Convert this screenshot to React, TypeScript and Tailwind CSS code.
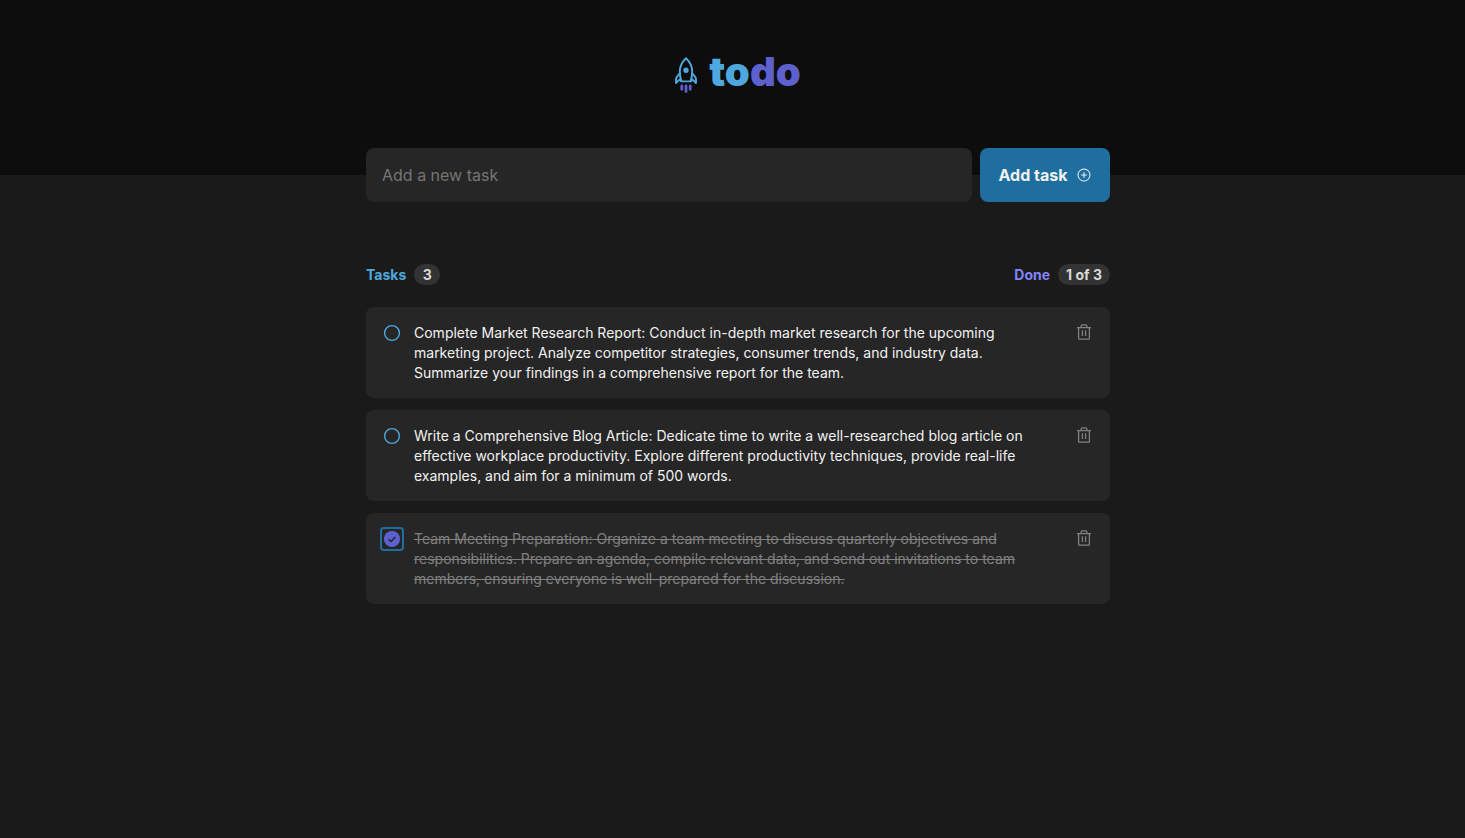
import { useState } from 'react';
import { PiPlusCircle } from 'react-icons/pi';

type Task = { id: number; text: string; done: boolean };

const initialTasks: Task[] = [
  {
    id: 1,
    text: 'Complete Market Research Report: Conduct in-depth market research for the upcoming marketing project. Analyze competitor strategies, consumer trends, and industry data. Summarize your findings in a comprehensive report for the team.',
    done: false,
  },
  {
    id: 2,
    text: 'Write a Comprehensive Blog Article: Dedicate time to write a well-researched blog article on effective workplace productivity. Explore different productivity techniques, provide real-life examples, and aim for a minimum of 500 words.',
    done: false,
  },
  {
    id: 3,
    text: 'Team Meeting Preparation: Organize a team meeting to discuss quarterly objectives and responsibilities. Prepare an agenda, compile relevant data, and send out invitations to team members, ensuring everyone is well-prepared for the discussion.',
    done: true,
  },
];

function Rocket() {
  return (
    <svg width="22" height="42" viewBox="0 -6 22 42" fill="none" aria-hidden="true">
      <path
        d="M11 1.2C7.4 4.6 4.8 9.4 4.8 14.6C4.8 18.2 5.4 21.4 6.4 24.4H15.6C16.6 21.4 17.2 18.2 17.2 14.6C17.2 9.4 14.6 4.6 11 1.2Z"
        stroke="#4EA8DE"
        strokeWidth="1.9"
        strokeLinejoin="round"
      />
      <path
        d="M5 16.2L2.4 19.2C1.4 20.4 1 21.6 1 23V26L4.4 22.6L6.4 24.4M17 16.2L19.6 19.2C20.6 20.4 21 21.6 21 23V26L17.6 22.6L15.6 24.4"
        stroke="#4EA8DE"
        strokeWidth="1.9"
        strokeLinejoin="round"
      />
      <circle cx="11" cy="13.2" r="2.7" fill="#4EA8DE" />
      <path d="M6.8 29V32.3M11 29V34.6M15.2 29V32.3" stroke="#5E60CE" strokeWidth="2.8" strokeLinecap="round" />
    </svg>
  );
}

function Trash() {
  return (
    <svg width="14" height="16" viewBox="0 0 14 16" fill="none" stroke="currentColor" strokeWidth="1.3" aria-hidden="true">
      <path d="M0 3.6H14M1.6 3.6V14.3C1.6 14.9 1.9 15.2 2.5 15.2H11.5C12.1 15.2 12.4 14.9 12.4 14.3V3.6M4.2 3.4V1.9C4.2 1.3 4.6 .9 5.2 .9H8.8C9.4 .9 9.8 1.3 9.8 1.9V3.4M5.4 6.2V12M8.6 6.2V12" />
    </svg>
  );
}

function TaskCard({ task, onToggle, onDelete }: { task: Task; onToggle: () => void; onDelete: () => void }) {
  return (
    <li className="flex items-start gap-2.5 rounded-lg bg-[#262626] pt-4 pr-3.5 pb-[15px] pl-3.5">
      <span className="-mt-0.5 grid size-6 shrink-0 place-items-center">
        <input
          id={`task-${task.id}`}
          type="checkbox"
          checked={task.done}
          onChange={onToggle}
          className="col-start-1 row-start-1 size-6 cursor-pointer appearance-none rounded border-2 border-transparent outline-none checked:border-[#1e6f9f]"
        />
        <svg className="pointer-events-none col-start-1 row-start-1" width="18" height="18" viewBox="0 0 18 18" fill="none" aria-hidden="true">
          {task.done ? (
            <>
              <circle cx="9" cy="9" r="8.1" fill="#5E60CE" />
              <path d="M5.6 9.2L7.9 11.5L12.3 6.9" stroke="#262626" strokeWidth="1.5" />
            </>
          ) : (
            <circle cx="9" cy="9" r="7.4" stroke="#4EA8DE" strokeWidth="1.4" />
          )}
        </svg>
      </span>
      <label
        htmlFor={`task-${task.id}`}
        className={task.done ? 'flex-1 pr-8 text-sm leading-5 text-[#808080] line-through' : 'flex-1 pr-8 text-sm leading-5 text-[#f2f2f2]'}
      >
        {task.text}
      </label>
      <button type="button" aria-label="Delete task" onClick={onDelete} className="-mt-0.5 flex h-6 w-6 cursor-pointer items-start justify-center pt-[3px] text-[#808080]">
        <Trash />
      </button>
    </li>
  );
}

export default function App() {
  const [tasks, setTasks] = useState(initialTasks);
  const [text, setText] = useState('');
  const done = tasks.filter((task) => task.done).length;

  function addTask() {
    if (!text.trim()) return;
    setTasks([...tasks, { id: Date.now(), text, done: false }]);
    setText('');
  }

  return (
    <div className="min-h-screen bg-[#1a1a1a] pl-[11px] font-[Inter,sans-serif] text-[#f2f2f2]">
      <header className="-ml-[11px] flex h-[175px] justify-center bg-[#0d0d0d] pt-12 pl-[11px]">
        <h1 className="flex h-12 items-center gap-3 text-[40px] leading-[48px] font-black">
          <Rocket />
          <span>
            <span className="text-[#4ea8de]">to</span>
            <span className="text-[#5e60ce]">do</span>
          </span>
        </h1>
      </header>
      <main className="mx-auto -mt-[27px] max-w-[744px]">
        <form
          className="flex gap-2"
          onSubmit={(event) => {
            event.preventDefault();
            addTask();
          }}
        >
          <input
            type="text"
            aria-label="Add a new task"
            placeholder="Add a new task"
            value={text}
            onChange={(event) => setText(event.target.value)}
            className="h-[54px] min-w-0 flex-1 rounded-lg bg-[#262626] px-4 text-base outline-none placeholder:text-[#757575]"
          />
          <button type="submit" className="flex h-[54px] w-[130px] cursor-pointer items-center justify-center gap-2 rounded-lg bg-[#1e6f9f] text-base font-bold">
            Add task
            <PiPlusCircle className="size-4" aria-hidden="true" />
          </button>
        </form>
        <section className="mt-[62px]">
          <div className="flex items-center justify-between text-sm leading-[21px] font-bold">
            <p className="flex gap-2 text-[#4ea8de]">
              Tasks <span className="min-w-[26px] rounded-full bg-[#333333] px-2 text-center text-[#d9d9d9]">{tasks.length}</span>
            </p>
            <p className="flex gap-2 text-[#8284fa]">
              Done{' '}
              <span className="rounded-full bg-[#333333] px-2 text-[#d9d9d9]">
                {done} of {tasks.length}
              </span>
            </p>
          </div>
          <ul className="mt-[22px] flex flex-col gap-3">
            {tasks.map((task) => (
              <TaskCard
                key={task.id}
                task={task}
                onToggle={() => setTasks(tasks.map((item) => (item.id === task.id ? { ...item, done: !item.done } : item)))}
                onDelete={() => setTasks(tasks.filter((item) => item.id !== task.id))}
              />
            ))}
          </ul>
        </section>
      </main>
    </div>
  );
}
